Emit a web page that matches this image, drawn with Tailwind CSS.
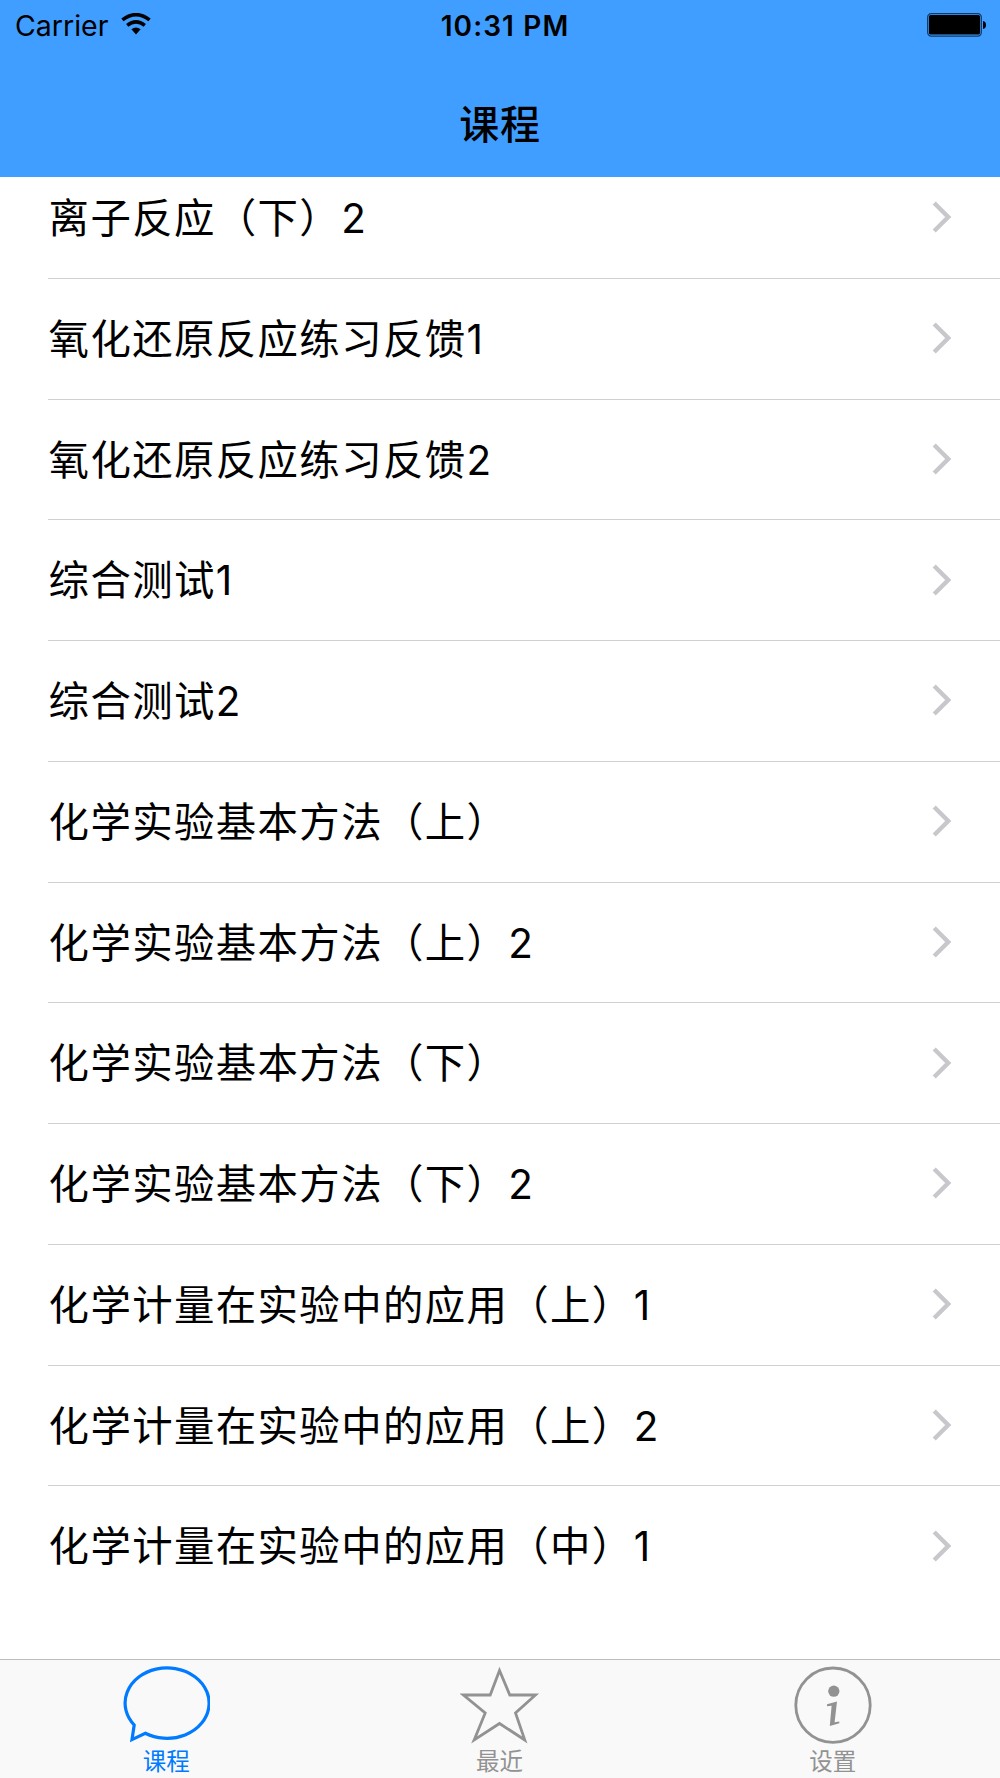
<!DOCTYPE html>
<html lang="zh-CN">
<head>
    <meta charset="UTF-8">
    <meta name="viewport" content="width=device-width, initial-scale=1.0">
    <title>课程</title>
    <script src="https://cdn.jsdelivr.net/npm/@tailwindcss/browser@4"></script>
</head>
<body class="bg-white text-black font-['Inter','Noto_Sans_CJK_SC',sans-serif]">
    <div class="h-[1778px] flex flex-col overflow-hidden">
        <header class="h-[177px] shrink-0 bg-[#3f9eff]">
            <!-- status bar -->
            <div class="h-[51px] grid grid-cols-3 items-center">
                <div class="flex items-center pl-[15px]">
                    <span class="text-[28.5px] leading-[50px]">Carrier</span>
                    <svg class="ml-[13px] -mt-[3px]" width="30" height="22" viewBox="0 0 30 22" fill="none" stroke="#000">
                        <path d="M1.4 6.9Q15 -3.6 28.6 6.9" stroke-width="3.6"/>
                        <path d="M6.2 12.3Q15 5.4 23.8 12.3" stroke-width="3.6"/>
                        <path d="M10.4 16.3Q15 12.9 19.6 16.3L15 21.5Z" fill="#000" stroke="none"/>
                    </svg>
                </div>
                <div class="pl-2.5 text-center text-[28px] leading-[50px] tracking-[1.1px] font-semibold whitespace-nowrap">10:31 PM</div>
                <div class="flex justify-end pr-3.5 -mt-px">
                    <svg width="59" height="24" viewBox="0 0 59 24">
                        <rect x="0.7" y="0.7" width="53.6" height="22.4" rx="3.5" fill="none" stroke="#123a66" stroke-width="1.3"/>
                        <rect x="2" y="2" width="51" height="19.6" rx="1.5"/>
                        <path d="M56 8Q59 8.6 59 12T56 16Z"/>
                    </svg>
                </div>
            </div>
            <h1 class="pt-[44px] text-center text-[40px] leading-[60px] font-medium tracking-[0.8px]">课程</h1>
        </header>

        <main class="flex-1 min-h-0 overflow-hidden">
            <ul id="courseList" class="-mt-[19px]"></ul>
        </main>

        <nav class="h-[119px] shrink-0 grid grid-cols-3 bg-[#f9f9f9] border-t border-[#bcbcbc] text-[#929292] text-[23.5px] leading-[34px]">
            <a class="flex flex-col items-center pt-1.5 text-[#007aff]">
                <svg class="mr-[2px]" width="88" height="78" viewBox="0 0 88 78" fill="none" stroke="currentColor" stroke-width="3.2">
                    <path d="M12.2 59A42 35.2 0 1 1 23.3 67.2L10 73.6Z"/>
                </svg>
                <span class="mr-px mt-px">课程</span>
            </a>
            <a class="flex flex-col items-center pt-1.5">
                <svg width="80" height="78" viewBox="0 0 80 78" fill="none" stroke="currentColor" stroke-width="2.8">
                    <path d="M39.5 4.5L49.8 29H75.5L55.5 47L64.8 74L39.5 57.5L14.2 74L25.2 47L3.5 29H30.2Z"/>
                </svg>
                <span class="mr-px mt-px">最近</span>
            </a>
            <a class="flex flex-col items-center pt-1.5">
                <svg width="78" height="78" viewBox="0 0 78 78" fill="currentColor">
                    <circle cx="39" cy="39.2" r="37.2" fill="none" stroke="currentColor" stroke-width="2.8"/>
                    <circle cx="39.8" cy="25.2" r="5.6"/>
                    <path d="M33 38.2L43 35.4L40.6 56.2L45.3 55.4V57.3L35.8 59.9L37.6 39.8L33 40.3Z"/>
                </svg>
                <span class="mr-px mt-px">设置</span>
            </a>
        </nav>
    </div>

    <script>
        const courses = [
            '离子反应（下）2',
            '氧化还原反应练习反馈1',
            '氧化还原反应练习反馈2',
            '综合测试1',
            '综合测试2',
            '化学实验基本方法（上）',
            '化学实验基本方法（上）2',
            '化学实验基本方法（下）',
            '化学实验基本方法（下）2',
            '化学计量在实验中的应用（上）1',
            '化学计量在实验中的应用（上）2',
            '化学计量在实验中的应用（中）1'
        ];

        document.getElementById('courseList').innerHTML = courses.map(name => `
            <li class="ml-12 pl-[0.6px] pr-[47px] h-[120.76px] flex items-center justify-between border-b border-[#d0cfd3] last:border-transparent">
                <span class="pt-[2.4px] text-[40.4px] leading-[60px] tracking-[1.4px] whitespace-nowrap">${name}</span>
                <svg class="-mt-px" width="21" height="32" viewBox="0 0 21 32" fill="none" stroke="#c7c7cc" stroke-width="4.4">
                    <path d="M2.2 2L16.2 16L2.2 30"/>
                </svg>
            </li>
        `).join('');
    </script>
</body>
</html>
